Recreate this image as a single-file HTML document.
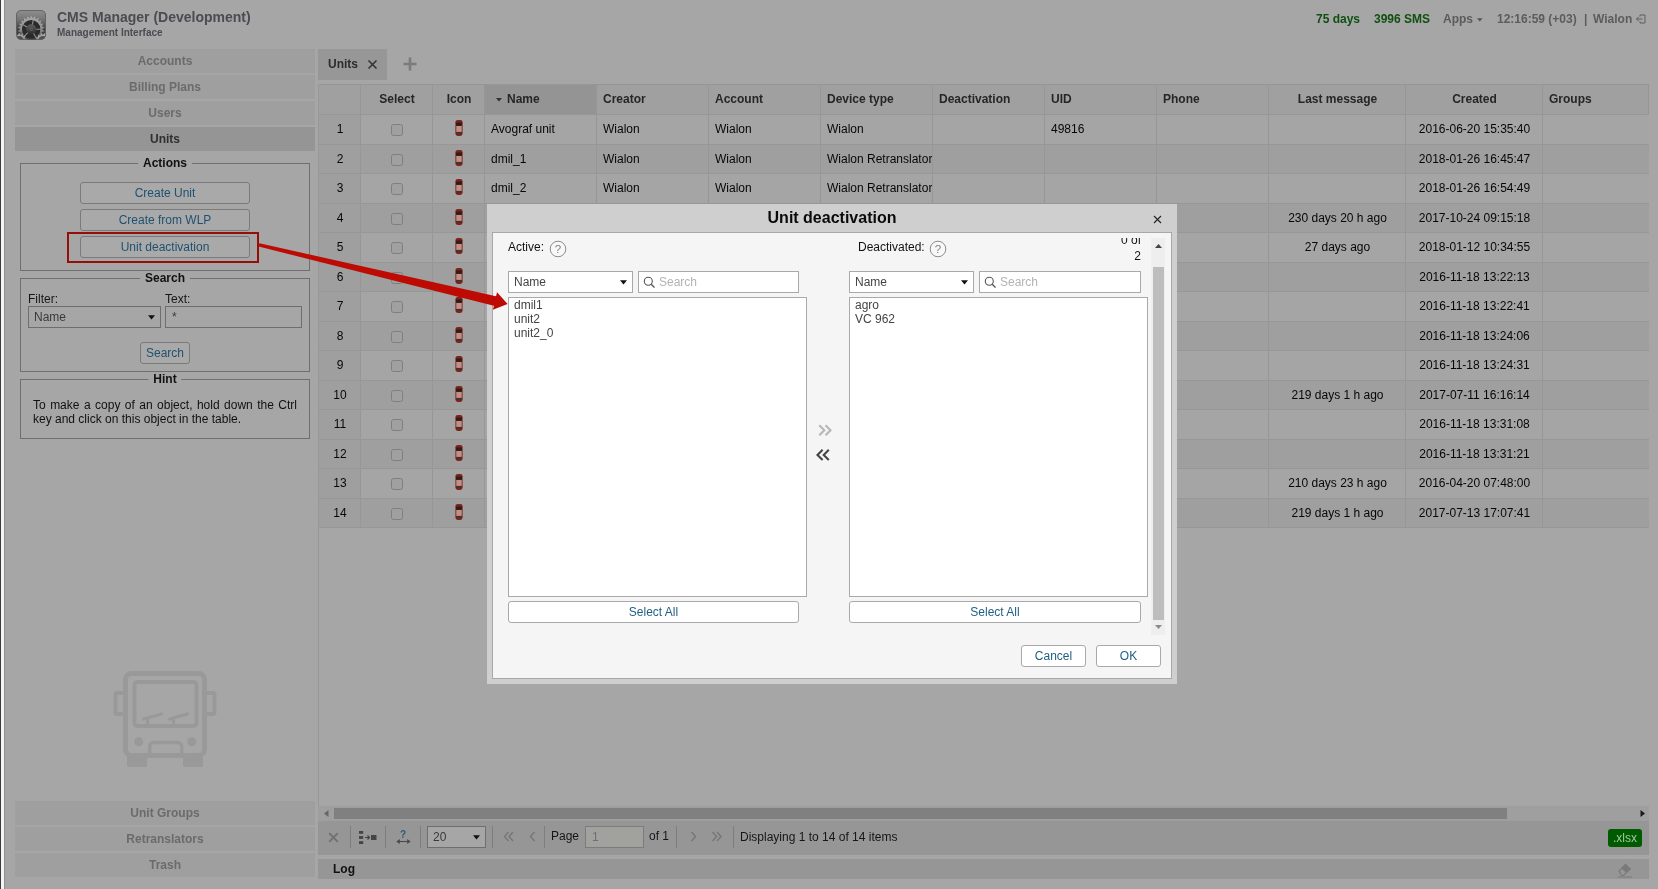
<!DOCTYPE html>
<html><head><meta charset="utf-8"><title>CMS Manager</title>
<style>
*{box-sizing:border-box;margin:0;padding:0}
html,body{width:1658px;height:889px;overflow:hidden}
body{background:#a6a6a6;font-family:"Liberation Sans",sans-serif;font-size:12px;color:#161616;position:relative}
.a{position:absolute;white-space:nowrap}
.b{font-weight:bold}
.h{display:inline}
.nav{position:absolute;left:15px;width:300px;height:24px;background:#9f9f9f;color:#6b6b6b;font-weight:bold;font-size:12px;text-align:center;line-height:25px}
.nav.sel{background:#959595;color:#2f2f2f}
.fs{position:absolute;border:1px solid #6f6f6f}
.fs .lg{position:absolute;top:-8px;left:50%;transform:translateX(-50%);background:#a6a6a6;padding:0 5px;font-weight:bold;font-size:12px;color:#111;line-height:14px}
.btn{position:absolute;border:1px solid #7a7a7a;border-radius:3px;background:#a9a9a9;color:#1f5170;font-size:12px;text-align:center}
.hc{position:absolute;top:85px;height:29px;background:#a0a0a0;border-left:1px solid #969696;font-weight:bold;color:#262626;line-height:28px;font-size:12px;white-space:nowrap;overflow:hidden}
.row{position:absolute;left:318px;width:1331px;border-top:1px solid #979797}
.c{position:absolute;top:0;bottom:0;border-left:1px solid #979797;line-height:29px;white-space:nowrap;overflow:hidden;color:#070707}
.cb{position:absolute;left:30px;top:9px;width:12px;height:12px;border:1px solid #7f7f7f;border-radius:2.500px;background:#a0a0a0}
.w{position:absolute;border:1px solid #a9a9a9;background:#fff;height:22px;line-height:20px}
</style></head>
<body>
<div id="wrap" style="position:absolute;left:0;top:0;width:1658px;height:889px;will-change:transform">
<div class="a" style="left:0;top:0;width:1px;height:889px;background:#3a3a3a"></div>
<div class="a" style="left:1px;top:0;width:3px;height:889px;background:#f4f4f4"></div>
<div class="a" style="left:4px;top:0;width:1px;height:889px;background:#8f8f8f"></div>
<svg class="a" style="left:16px;top:10px" width="30" height="30" viewBox="0 0 30 30">
<defs><linearGradient id="ig" x1="0" y1="0" x2="0" y2="1"><stop offset="0" stop-color="#8e8e8e"/><stop offset="0.3" stop-color="#777"/><stop offset="0.6" stop-color="#454545"/><stop offset="1" stop-color="#333"/></linearGradient>
<linearGradient id="hg" x1="0" y1="0" x2="0" y2="1"><stop offset="0" stop-color="#5e5e5e"/><stop offset="1" stop-color="#2e2e2e"/></linearGradient>
<linearGradient id="tg" gradientUnits="userSpaceOnUse" x1="0" y1="5" x2="0" y2="33"><stop offset="0" stop-color="#ababab"/><stop offset="0.55" stop-color="#8c8c8c"/><stop offset="0.8" stop-color="#3c3c3c"/><stop offset="1" stop-color="#2a2a2a"/></linearGradient>
<clipPath id="ic"><rect x="0.3" y="0.3" width="29.4" height="29.200" rx="4.500"/></clipPath></defs>
<rect x="0.3" y="0.3" width="29.400" height="29.200" rx="4.500" fill="url(#ig)"/>
<g clip-path="url(#ic)">
<path d="M26.00 19.30 L28.66 21.24 L25.56 22.34 L27.57 24.95 L24.29 25.14 L25.48 28.21 L22.27 27.46 L22.55 30.74 L19.69 29.12 L19.03 32.35 L16.74 29.99 L15.20 32.90 L13.66 29.99 L11.37 32.35 L10.71 29.12 L7.85 30.74 L8.13 27.46 L4.92 28.21 L6.11 25.14 L2.83 24.95 L4.84 22.34 L1.74 21.24 L4.40 19.30 L1.74 17.36 L4.84 16.26 L2.83 13.65 L6.11 13.46 L4.92 10.39 L8.13 11.14 L7.85 7.86 L10.71 9.48 L11.37 6.25 L13.66 8.61 L15.20 5.70 L16.74 8.61 L19.03 6.25 L19.69 9.48 L22.55 7.86 L22.27 11.14 L25.48 10.39 L24.29 13.46 L27.57 13.65 L25.56 16.26 L28.66 17.36z" fill="url(#tg)"/>
<circle cx="15.2" cy="19.3" r="10" fill="#2a2a2a" stroke="url(#tg)" stroke-width="1.500"/>
<path d="M15.20 19.30L17.45 9.56M15.20 19.30L6.45 14.45M15.20 19.30L25.20 19.30M15.20 19.30L8.13 26.37M15.20 19.30L20.20 27.96" stroke="#8e8e8e" stroke-width="1.100" fill="none"/>
<circle cx="15.2" cy="19.3" r="5" fill="url(#hg)"/>
<circle cx="15.2" cy="19.3" r="1.300" fill="none" stroke="#6c6c6c" stroke-width="0.600"/>
<path d="M9.00 30.80 L11.19 32.62 L8.43 33.32 L9.61 35.91 L6.82 35.33 L6.76 38.19 L4.49 36.45 L3.20 39.00 L1.91 36.45 L-0.36 38.19 L-0.42 35.33 L-3.21 35.91 L-2.03 33.32 L-4.79 32.62 L-2.60 30.80 L-4.79 28.98 L-2.03 28.28 L-3.21 25.69 L-0.42 26.27 L-0.36 23.41 L1.91 25.15 L3.20 22.60 L4.49 25.15 L6.76 23.41 L6.82 26.27 L9.61 25.69 L8.43 28.28 L11.19 28.98z" fill="#a6a6a6"/><circle cx="3.200" cy="30.800" r="4.800" fill="#505050"/>
<path d="M32.58 31.95 L34.37 34.18 L31.52 34.30 L32.17 37.08 L29.54 35.96 L28.92 38.75 L27.04 36.60 L25.27 38.84 L24.51 36.09 L21.95 37.33 L22.45 34.53 L19.60 34.54 L21.28 32.23 L18.70 31.00 L21.22 29.65 L19.43 27.42 L22.28 27.30 L21.63 24.52 L24.26 25.64 L24.88 22.85 L26.76 25.00 L28.53 22.76 L29.29 25.51 L31.85 24.27 L31.35 27.07 L34.20 27.06 L32.52 29.37 L35.10 30.60z" fill="#a6a6a6"/><circle cx="26.900" cy="30.800" r="4.800" fill="#505050"/>
</g>
<rect x="0.500" y="0.500" width="29" height="28.800" rx="4.500" fill="none" stroke="#5a5a5a" stroke-width="0.800"/>
</svg>
<div class="a b" style="left:57px;top:8.500px;font-size:14px;color:#4b4b52;line-height:16px">CMS Manager (Development)</div>
<div class="a b" style="left:57px;top:27px;font-size:10px;color:#4b4b52;line-height:12px">Management Interface</div>
<div class="nav" style="top:49px"><span class="h">Accounts</span></div>
<div class="nav" style="top:75px"><span class="h">Billing Plans</span></div>
<div class="nav" style="top:101px"><span class="h">Users</span></div>
<div class="nav sel" style="top:127px"><span class="h">Units</span></div>
<div class="nav" style="top:801px"><span class="h">Unit Groups</span></div>
<div class="nav" style="top:827px"><span class="h">Retranslators</span></div>
<div class="nav" style="top:853px"><span class="h">Trash</span></div>
<div class="fs" style="left:20px;top:163px;width:290px;height:108px"><span class="lg">Actions</span></div>
<div class="btn" style="left:80px;top:182px;width:170px;height:22px;line-height:20px">Create Unit</div>
<div class="btn" style="left:80px;top:209px;width:170px;height:22px;line-height:20px">Create from WLP</div>
<div class="btn" style="left:80px;top:236px;width:170px;height:22px;line-height:20px">Unit deactivation</div>
<div class="fs" style="left:20px;top:278px;width:290px;height:94px"><span class="lg">Search</span></div>
<div class="a" style="left:28px;top:292px;line-height:14px">Filter:</div>
<div class="a" style="left:165px;top:292px;line-height:14px">Text:</div>
<div class="a" style="left:28px;top:306px;width:133px;height:22px;border:1px solid #6e6e6e;background:#a6a6a6;line-height:20px;padding-left:5px;color:#3a3a3a">Name<svg class="a" style="right:5px;top:8px" width="7" height="5" viewBox="0 0 7 5"><path d="M0 0.300h7L3.500 4.500z" fill="#111"/></svg></div>
<div class="a" style="left:165px;top:306px;width:137px;height:22px;border:1px solid #6e6e6e;background:#a6a6a6;line-height:20px;padding-left:6px;color:#3a3a3a">*</div>
<div class="btn" style="left:140px;top:342px;width:50px;height:22px;line-height:20px">Search</div>
<div class="fs" style="left:20px;top:379px;width:290px;height:60px"><span class="lg">Hint</span></div>
<div class="a" style="left:33px;top:398px;width:264px;white-space:normal;text-align:justify;line-height:14px;color:#111">To make a copy of an object, hold down the Ctrl key and click on this object in the table.</div>
<svg class="a" style="left:110px;top:666px" width="110" height="106" viewBox="110 666 110 106" fill="none" stroke="#999999">
<rect x="125.500" y="673.500" width="79" height="82" rx="6" stroke-width="5"/>
<rect x="134.500" y="682" width="62" height="44" rx="3" stroke-width="4"/>
<path d="M123 693h-5.500a2 2 0 0 0-2 2v17a2 2 0 0 0 2 2H123M207 693h5.500a2 2 0 0 1 2 2v17a2 2 0 0 1-2 2H207" stroke-width="4"/>
<path d="M143.500 719l18-5M147.500 718.500v5M169.500 719l18-5M173.500 718.500v5" stroke-width="3.200" stroke-linecap="round"/>
<circle cx="138.700" cy="741.700" r="4.500" fill="#999999" stroke="none"/>
<circle cx="191.700" cy="741.700" r="4.500" fill="#999999" stroke="none"/>
<path d="M149.700 755v-8.500a4 4 0 0 1 4-4h24a4 4 0 0 1 4 4v8.500" stroke-width="3.600"/>
<path d="M127 757h20v8a2 2 0 0 1-2 2h-16a2 2 0 0 1-2-2zM183 757h20v8a2 2 0 0 1-2 2h-16a2 2 0 0 1-2-2z" fill="#999999" stroke="none"/>
</svg>
<div class="a b" style="left:1316px;top:12px;line-height:14px;color:#0f5012">75 days</div>
<div class="a b" style="left:1374px;top:12px;line-height:14px;color:#0f5012">3996 SMS</div>
<div class="a b" style="left:1443px;top:12px;line-height:14px;color:#5c5c5c">Apps</div>
<svg class="a" style="left:1476.500px;top:18px" width="6" height="4" viewBox="0 0 6 4"><path d="M0 0.300h5.600L2.800 3.600z" fill="#555"/></svg>
<div class="a b" style="left:1497px;top:12px;line-height:14px;color:#5c5c5c">12:16:59 (+03)</div>
<div class="a b" style="left:1584px;top:12px;line-height:14px;color:#5c5c5c">|</div>
<div class="a b" style="left:1593px;top:12px;line-height:14px;color:#5c5c5c">Wialon</div>
<svg class="a" style="left:1636px;top:14px" width="10" height="10" viewBox="0 0 10 10" fill="none" stroke="#5c5c5c" stroke-width="1"><path d="M4 2.500v-1.500h5v8h-5v-1.500"/><path d="M6.500 5h-6M2.700 2.800L0.500 5 2.700 7.200"/></svg>
<div class="a b" style="left:318px;top:49px;width:69px;height:31px;background:#979797;color:#2c2c2c;line-height:30px;padding-left:10px">Units</div>
<svg class="a" style="left:367px;top:59px" width="11" height="11" viewBox="0 0 11 11"><path d="M1.500 1.500l8 8M9.500 1.500l-8 8" stroke="#333" stroke-width="1.600" fill="none"/></svg>
<svg class="a" style="left:403px;top:57px" width="14" height="14" viewBox="0 0 14 14"><path d="M7 0.500v13M0.500 7h13" stroke="#7b7b7b" stroke-width="2.600" fill="none"/></svg>
<div class="a" style="left:318px;top:84px;width:1331px;height:1px;background:#969696"></div>
<div class="hc" style="left:318px;width:42px;"></div>
<div class="hc" style="left:360px;width:72px;text-align:center;padding-left:1px;">Select</div>
<div class="hc" style="left:432px;width:52px;text-align:center;padding-left:1px;">Icon</div>
<div class="hc" style="left:484px;width:112px;padding-left:22px;background:#949494;"><svg class="a" style="left:11px;top:13px" width="6" height="4" viewBox="0 0 6 4"><path d="M0 0h6L3 3.500z" fill="#333"/></svg>Name</div>
<div class="hc" style="left:596px;width:112px;padding-left:6px;">Creator</div>
<div class="hc" style="left:708px;width:112px;padding-left:6px;">Account</div>
<div class="hc" style="left:820px;width:112px;padding-left:6px;">Device type</div>
<div class="hc" style="left:932px;width:112px;padding-left:6px;">Deactivation</div>
<div class="hc" style="left:1044px;width:112px;padding-left:6px;">UID</div>
<div class="hc" style="left:1156px;width:112px;padding-left:6px;">Phone</div>
<div class="hc" style="left:1268px;width:137px;text-align:center;padding-left:1px;">Last message</div>
<div class="hc" style="left:1405px;width:137px;text-align:center;padding-left:1px;">Created</div>
<div class="hc" style="left:1542px;width:107px;padding-left:6px;">Groups</div>
<div class="a" style="left:1648px;top:84px;width:1px;height:30px;background:#969696"></div>
<div class="row" style="top:114px;height:30px;background:#a5a5a5"><div class="c" style="left:0px;width:42px;text-align:center;background:#9f9f9f;padding-left:1px;">1</div><div class="c" style="left:42px;width:72px;"><span class="cb"></span></div><div class="c" style="left:114px;width:52px;"><svg class="a" style="left:22px;top:4px" width="8" height="18" viewBox="0 0 8 18"><rect x="0.400" y="0.900" width="7.200" height="16" rx="2.400" fill="#7f2219"/><rect x="1" y="3.400" width="6" height="3.400" rx="0.800" fill="#2b1d18"/><rect x="1.300" y="7" width="5.400" height="5.900" fill="#bf908c"/><rect x="1.200" y="13" width="5.600" height="1.700" fill="#3a382c"/></svg></div><div class="c" style="left:166px;width:112px;padding-left:6px;">Avograf unit</div><div class="c" style="left:278px;width:112px;padding-left:6px;">Wialon</div><div class="c" style="left:390px;width:112px;padding-left:6px;">Wialon</div><div class="c" style="left:502px;width:112px;padding-left:6px;">Wialon</div><div class="c" style="left:614px;width:112px;padding-left:6px;"></div><div class="c" style="left:726px;width:112px;padding-left:6px;">49816</div><div class="c" style="left:838px;width:112px;padding-left:6px;"></div><div class="c" style="left:950px;width:137px;text-align:center;padding-left:1px;"></div><div class="c" style="left:1087px;width:137px;text-align:center;padding-left:1px;">2016-06-20 15:35:40</div><div class="c" style="left:1224px;width:107px;"></div></div>
<div class="row" style="top:144px;height:29px;background:#9f9f9f"><div class="c" style="left:0px;width:42px;text-align:center;background:#9f9f9f;padding-left:1px;">2</div><div class="c" style="left:42px;width:72px;"><span class="cb"></span></div><div class="c" style="left:114px;width:52px;"><svg class="a" style="left:22px;top:4px" width="8" height="18" viewBox="0 0 8 18"><rect x="0.400" y="0.900" width="7.200" height="16" rx="2.400" fill="#7f2219"/><rect x="1" y="3.400" width="6" height="3.400" rx="0.800" fill="#2b1d18"/><rect x="1.300" y="7" width="5.400" height="5.900" fill="#bf908c"/><rect x="1.200" y="13" width="5.600" height="1.700" fill="#3a382c"/></svg></div><div class="c" style="left:166px;width:112px;padding-left:6px;">dmil_1</div><div class="c" style="left:278px;width:112px;padding-left:6px;">Wialon</div><div class="c" style="left:390px;width:112px;padding-left:6px;">Wialon</div><div class="c" style="left:502px;width:112px;padding-left:6px;">Wialon Retranslator</div><div class="c" style="left:614px;width:112px;padding-left:6px;"></div><div class="c" style="left:726px;width:112px;padding-left:6px;"></div><div class="c" style="left:838px;width:112px;padding-left:6px;"></div><div class="c" style="left:950px;width:137px;text-align:center;padding-left:1px;"></div><div class="c" style="left:1087px;width:137px;text-align:center;padding-left:1px;">2018-01-26 16:45:47</div><div class="c" style="left:1224px;width:107px;"></div></div>
<div class="row" style="top:173px;height:30px;background:#a5a5a5"><div class="c" style="left:0px;width:42px;text-align:center;background:#9f9f9f;padding-left:1px;">3</div><div class="c" style="left:42px;width:72px;"><span class="cb"></span></div><div class="c" style="left:114px;width:52px;"><svg class="a" style="left:22px;top:4px" width="8" height="18" viewBox="0 0 8 18"><rect x="0.400" y="0.900" width="7.200" height="16" rx="2.400" fill="#7f2219"/><rect x="1" y="3.400" width="6" height="3.400" rx="0.800" fill="#2b1d18"/><rect x="1.300" y="7" width="5.400" height="5.900" fill="#bf908c"/><rect x="1.200" y="13" width="5.600" height="1.700" fill="#3a382c"/></svg></div><div class="c" style="left:166px;width:112px;padding-left:6px;">dmil_2</div><div class="c" style="left:278px;width:112px;padding-left:6px;">Wialon</div><div class="c" style="left:390px;width:112px;padding-left:6px;">Wialon</div><div class="c" style="left:502px;width:112px;padding-left:6px;">Wialon Retranslator</div><div class="c" style="left:614px;width:112px;padding-left:6px;"></div><div class="c" style="left:726px;width:112px;padding-left:6px;"></div><div class="c" style="left:838px;width:112px;padding-left:6px;"></div><div class="c" style="left:950px;width:137px;text-align:center;padding-left:1px;"></div><div class="c" style="left:1087px;width:137px;text-align:center;padding-left:1px;">2018-01-26 16:54:49</div><div class="c" style="left:1224px;width:107px;"></div></div>
<div class="row" style="top:203px;height:29px;background:#9f9f9f"><div class="c" style="left:0px;width:42px;text-align:center;background:#9f9f9f;padding-left:1px;">4</div><div class="c" style="left:42px;width:72px;"><span class="cb"></span></div><div class="c" style="left:114px;width:52px;"><svg class="a" style="left:22px;top:4px" width="8" height="18" viewBox="0 0 8 18"><rect x="0.400" y="0.900" width="7.200" height="16" rx="2.400" fill="#7f2219"/><rect x="1" y="3.400" width="6" height="3.400" rx="0.800" fill="#2b1d18"/><rect x="1.300" y="7" width="5.400" height="5.900" fill="#bf908c"/><rect x="1.200" y="13" width="5.600" height="1.700" fill="#3a382c"/></svg></div><div class="c" style="left:166px;width:112px;padding-left:6px;"></div><div class="c" style="left:278px;width:112px;padding-left:6px;"></div><div class="c" style="left:390px;width:112px;padding-left:6px;"></div><div class="c" style="left:502px;width:112px;padding-left:6px;"></div><div class="c" style="left:614px;width:112px;padding-left:6px;"></div><div class="c" style="left:726px;width:112px;padding-left:6px;"></div><div class="c" style="left:838px;width:112px;padding-left:6px;"></div><div class="c" style="left:950px;width:137px;text-align:center;padding-left:1px;">230 days 20 h ago</div><div class="c" style="left:1087px;width:137px;text-align:center;padding-left:1px;">2017-10-24 09:15:18</div><div class="c" style="left:1224px;width:107px;"></div></div>
<div class="row" style="top:232px;height:30px;background:#a5a5a5"><div class="c" style="left:0px;width:42px;text-align:center;background:#9f9f9f;padding-left:1px;">5</div><div class="c" style="left:42px;width:72px;"><span class="cb"></span></div><div class="c" style="left:114px;width:52px;"><svg class="a" style="left:22px;top:4px" width="8" height="18" viewBox="0 0 8 18"><rect x="0.400" y="0.900" width="7.200" height="16" rx="2.400" fill="#7f2219"/><rect x="1" y="3.400" width="6" height="3.400" rx="0.800" fill="#2b1d18"/><rect x="1.300" y="7" width="5.400" height="5.900" fill="#bf908c"/><rect x="1.200" y="13" width="5.600" height="1.700" fill="#3a382c"/></svg></div><div class="c" style="left:166px;width:112px;padding-left:6px;"></div><div class="c" style="left:278px;width:112px;padding-left:6px;"></div><div class="c" style="left:390px;width:112px;padding-left:6px;"></div><div class="c" style="left:502px;width:112px;padding-left:6px;"></div><div class="c" style="left:614px;width:112px;padding-left:6px;"></div><div class="c" style="left:726px;width:112px;padding-left:6px;"></div><div class="c" style="left:838px;width:112px;padding-left:6px;"></div><div class="c" style="left:950px;width:137px;text-align:center;padding-left:1px;">27 days ago</div><div class="c" style="left:1087px;width:137px;text-align:center;padding-left:1px;">2018-01-12 10:34:55</div><div class="c" style="left:1224px;width:107px;"></div></div>
<div class="row" style="top:262px;height:29px;background:#9f9f9f"><div class="c" style="left:0px;width:42px;text-align:center;background:#9f9f9f;padding-left:1px;">6</div><div class="c" style="left:42px;width:72px;"><span class="cb"></span></div><div class="c" style="left:114px;width:52px;"><svg class="a" style="left:22px;top:4px" width="8" height="18" viewBox="0 0 8 18"><rect x="0.400" y="0.900" width="7.200" height="16" rx="2.400" fill="#7f2219"/><rect x="1" y="3.400" width="6" height="3.400" rx="0.800" fill="#2b1d18"/><rect x="1.300" y="7" width="5.400" height="5.900" fill="#bf908c"/><rect x="1.200" y="13" width="5.600" height="1.700" fill="#3a382c"/></svg></div><div class="c" style="left:166px;width:112px;padding-left:6px;"></div><div class="c" style="left:278px;width:112px;padding-left:6px;"></div><div class="c" style="left:390px;width:112px;padding-left:6px;"></div><div class="c" style="left:502px;width:112px;padding-left:6px;"></div><div class="c" style="left:614px;width:112px;padding-left:6px;"></div><div class="c" style="left:726px;width:112px;padding-left:6px;"></div><div class="c" style="left:838px;width:112px;padding-left:6px;"></div><div class="c" style="left:950px;width:137px;text-align:center;padding-left:1px;"></div><div class="c" style="left:1087px;width:137px;text-align:center;padding-left:1px;">2016-11-18 13:22:13</div><div class="c" style="left:1224px;width:107px;"></div></div>
<div class="row" style="top:291px;height:30px;background:#a5a5a5"><div class="c" style="left:0px;width:42px;text-align:center;background:#9f9f9f;padding-left:1px;">7</div><div class="c" style="left:42px;width:72px;"><span class="cb"></span></div><div class="c" style="left:114px;width:52px;"><svg class="a" style="left:22px;top:4px" width="8" height="18" viewBox="0 0 8 18"><rect x="0.400" y="0.900" width="7.200" height="16" rx="2.400" fill="#7f2219"/><rect x="1" y="3.400" width="6" height="3.400" rx="0.800" fill="#2b1d18"/><rect x="1.300" y="7" width="5.400" height="5.900" fill="#bf908c"/><rect x="1.200" y="13" width="5.600" height="1.700" fill="#3a382c"/></svg></div><div class="c" style="left:166px;width:112px;padding-left:6px;"></div><div class="c" style="left:278px;width:112px;padding-left:6px;"></div><div class="c" style="left:390px;width:112px;padding-left:6px;"></div><div class="c" style="left:502px;width:112px;padding-left:6px;"></div><div class="c" style="left:614px;width:112px;padding-left:6px;"></div><div class="c" style="left:726px;width:112px;padding-left:6px;"></div><div class="c" style="left:838px;width:112px;padding-left:6px;"></div><div class="c" style="left:950px;width:137px;text-align:center;padding-left:1px;"></div><div class="c" style="left:1087px;width:137px;text-align:center;padding-left:1px;">2016-11-18 13:22:41</div><div class="c" style="left:1224px;width:107px;"></div></div>
<div class="row" style="top:321px;height:29px;background:#9f9f9f"><div class="c" style="left:0px;width:42px;text-align:center;background:#9f9f9f;padding-left:1px;">8</div><div class="c" style="left:42px;width:72px;"><span class="cb"></span></div><div class="c" style="left:114px;width:52px;"><svg class="a" style="left:22px;top:4px" width="8" height="18" viewBox="0 0 8 18"><rect x="0.400" y="0.900" width="7.200" height="16" rx="2.400" fill="#7f2219"/><rect x="1" y="3.400" width="6" height="3.400" rx="0.800" fill="#2b1d18"/><rect x="1.300" y="7" width="5.400" height="5.900" fill="#bf908c"/><rect x="1.200" y="13" width="5.600" height="1.700" fill="#3a382c"/></svg></div><div class="c" style="left:166px;width:112px;padding-left:6px;"></div><div class="c" style="left:278px;width:112px;padding-left:6px;"></div><div class="c" style="left:390px;width:112px;padding-left:6px;"></div><div class="c" style="left:502px;width:112px;padding-left:6px;"></div><div class="c" style="left:614px;width:112px;padding-left:6px;"></div><div class="c" style="left:726px;width:112px;padding-left:6px;"></div><div class="c" style="left:838px;width:112px;padding-left:6px;"></div><div class="c" style="left:950px;width:137px;text-align:center;padding-left:1px;"></div><div class="c" style="left:1087px;width:137px;text-align:center;padding-left:1px;">2016-11-18 13:24:06</div><div class="c" style="left:1224px;width:107px;"></div></div>
<div class="row" style="top:350px;height:30px;background:#a5a5a5"><div class="c" style="left:0px;width:42px;text-align:center;background:#9f9f9f;padding-left:1px;">9</div><div class="c" style="left:42px;width:72px;"><span class="cb"></span></div><div class="c" style="left:114px;width:52px;"><svg class="a" style="left:22px;top:4px" width="8" height="18" viewBox="0 0 8 18"><rect x="0.400" y="0.900" width="7.200" height="16" rx="2.400" fill="#7f2219"/><rect x="1" y="3.400" width="6" height="3.400" rx="0.800" fill="#2b1d18"/><rect x="1.300" y="7" width="5.400" height="5.900" fill="#bf908c"/><rect x="1.200" y="13" width="5.600" height="1.700" fill="#3a382c"/></svg></div><div class="c" style="left:166px;width:112px;padding-left:6px;"></div><div class="c" style="left:278px;width:112px;padding-left:6px;"></div><div class="c" style="left:390px;width:112px;padding-left:6px;"></div><div class="c" style="left:502px;width:112px;padding-left:6px;"></div><div class="c" style="left:614px;width:112px;padding-left:6px;"></div><div class="c" style="left:726px;width:112px;padding-left:6px;"></div><div class="c" style="left:838px;width:112px;padding-left:6px;"></div><div class="c" style="left:950px;width:137px;text-align:center;padding-left:1px;"></div><div class="c" style="left:1087px;width:137px;text-align:center;padding-left:1px;">2016-11-18 13:24:31</div><div class="c" style="left:1224px;width:107px;"></div></div>
<div class="row" style="top:380px;height:29px;background:#9f9f9f"><div class="c" style="left:0px;width:42px;text-align:center;background:#9f9f9f;padding-left:1px;">10</div><div class="c" style="left:42px;width:72px;"><span class="cb"></span></div><div class="c" style="left:114px;width:52px;"><svg class="a" style="left:22px;top:4px" width="8" height="18" viewBox="0 0 8 18"><rect x="0.400" y="0.900" width="7.200" height="16" rx="2.400" fill="#7f2219"/><rect x="1" y="3.400" width="6" height="3.400" rx="0.800" fill="#2b1d18"/><rect x="1.300" y="7" width="5.400" height="5.900" fill="#bf908c"/><rect x="1.200" y="13" width="5.600" height="1.700" fill="#3a382c"/></svg></div><div class="c" style="left:166px;width:112px;padding-left:6px;"></div><div class="c" style="left:278px;width:112px;padding-left:6px;"></div><div class="c" style="left:390px;width:112px;padding-left:6px;"></div><div class="c" style="left:502px;width:112px;padding-left:6px;"></div><div class="c" style="left:614px;width:112px;padding-left:6px;"></div><div class="c" style="left:726px;width:112px;padding-left:6px;"></div><div class="c" style="left:838px;width:112px;padding-left:6px;"></div><div class="c" style="left:950px;width:137px;text-align:center;padding-left:1px;">219 days 1 h ago</div><div class="c" style="left:1087px;width:137px;text-align:center;padding-left:1px;">2017-07-11 16:16:14</div><div class="c" style="left:1224px;width:107px;"></div></div>
<div class="row" style="top:409px;height:30px;background:#a5a5a5"><div class="c" style="left:0px;width:42px;text-align:center;background:#9f9f9f;padding-left:1px;">11</div><div class="c" style="left:42px;width:72px;"><span class="cb"></span></div><div class="c" style="left:114px;width:52px;"><svg class="a" style="left:22px;top:4px" width="8" height="18" viewBox="0 0 8 18"><rect x="0.400" y="0.900" width="7.200" height="16" rx="2.400" fill="#7f2219"/><rect x="1" y="3.400" width="6" height="3.400" rx="0.800" fill="#2b1d18"/><rect x="1.300" y="7" width="5.400" height="5.900" fill="#bf908c"/><rect x="1.200" y="13" width="5.600" height="1.700" fill="#3a382c"/></svg></div><div class="c" style="left:166px;width:112px;padding-left:6px;"></div><div class="c" style="left:278px;width:112px;padding-left:6px;"></div><div class="c" style="left:390px;width:112px;padding-left:6px;"></div><div class="c" style="left:502px;width:112px;padding-left:6px;"></div><div class="c" style="left:614px;width:112px;padding-left:6px;"></div><div class="c" style="left:726px;width:112px;padding-left:6px;"></div><div class="c" style="left:838px;width:112px;padding-left:6px;"></div><div class="c" style="left:950px;width:137px;text-align:center;padding-left:1px;"></div><div class="c" style="left:1087px;width:137px;text-align:center;padding-left:1px;">2016-11-18 13:31:08</div><div class="c" style="left:1224px;width:107px;"></div></div>
<div class="row" style="top:439px;height:29px;background:#9f9f9f"><div class="c" style="left:0px;width:42px;text-align:center;background:#9f9f9f;padding-left:1px;">12</div><div class="c" style="left:42px;width:72px;"><span class="cb"></span></div><div class="c" style="left:114px;width:52px;"><svg class="a" style="left:22px;top:4px" width="8" height="18" viewBox="0 0 8 18"><rect x="0.400" y="0.900" width="7.200" height="16" rx="2.400" fill="#7f2219"/><rect x="1" y="3.400" width="6" height="3.400" rx="0.800" fill="#2b1d18"/><rect x="1.300" y="7" width="5.400" height="5.900" fill="#bf908c"/><rect x="1.200" y="13" width="5.600" height="1.700" fill="#3a382c"/></svg></div><div class="c" style="left:166px;width:112px;padding-left:6px;"></div><div class="c" style="left:278px;width:112px;padding-left:6px;"></div><div class="c" style="left:390px;width:112px;padding-left:6px;"></div><div class="c" style="left:502px;width:112px;padding-left:6px;"></div><div class="c" style="left:614px;width:112px;padding-left:6px;"></div><div class="c" style="left:726px;width:112px;padding-left:6px;"></div><div class="c" style="left:838px;width:112px;padding-left:6px;"></div><div class="c" style="left:950px;width:137px;text-align:center;padding-left:1px;"></div><div class="c" style="left:1087px;width:137px;text-align:center;padding-left:1px;">2016-11-18 13:31:21</div><div class="c" style="left:1224px;width:107px;"></div></div>
<div class="row" style="top:468px;height:30px;background:#a5a5a5"><div class="c" style="left:0px;width:42px;text-align:center;background:#9f9f9f;padding-left:1px;">13</div><div class="c" style="left:42px;width:72px;"><span class="cb"></span></div><div class="c" style="left:114px;width:52px;"><svg class="a" style="left:22px;top:4px" width="8" height="18" viewBox="0 0 8 18"><rect x="0.400" y="0.900" width="7.200" height="16" rx="2.400" fill="#7f2219"/><rect x="1" y="3.400" width="6" height="3.400" rx="0.800" fill="#2b1d18"/><rect x="1.300" y="7" width="5.400" height="5.900" fill="#bf908c"/><rect x="1.200" y="13" width="5.600" height="1.700" fill="#3a382c"/></svg></div><div class="c" style="left:166px;width:112px;padding-left:6px;"></div><div class="c" style="left:278px;width:112px;padding-left:6px;"></div><div class="c" style="left:390px;width:112px;padding-left:6px;"></div><div class="c" style="left:502px;width:112px;padding-left:6px;"></div><div class="c" style="left:614px;width:112px;padding-left:6px;"></div><div class="c" style="left:726px;width:112px;padding-left:6px;"></div><div class="c" style="left:838px;width:112px;padding-left:6px;"></div><div class="c" style="left:950px;width:137px;text-align:center;padding-left:1px;">210 days 23 h ago</div><div class="c" style="left:1087px;width:137px;text-align:center;padding-left:1px;">2016-04-20 07:48:00</div><div class="c" style="left:1224px;width:107px;"></div></div>
<div class="row" style="top:498px;height:29px;background:#9f9f9f"><div class="c" style="left:0px;width:42px;text-align:center;background:#9f9f9f;padding-left:1px;">14</div><div class="c" style="left:42px;width:72px;"><span class="cb"></span></div><div class="c" style="left:114px;width:52px;"><svg class="a" style="left:22px;top:4px" width="8" height="18" viewBox="0 0 8 18"><rect x="0.400" y="0.900" width="7.200" height="16" rx="2.400" fill="#7f2219"/><rect x="1" y="3.400" width="6" height="3.400" rx="0.800" fill="#2b1d18"/><rect x="1.300" y="7" width="5.400" height="5.900" fill="#bf908c"/><rect x="1.200" y="13" width="5.600" height="1.700" fill="#3a382c"/></svg></div><div class="c" style="left:166px;width:112px;padding-left:6px;"></div><div class="c" style="left:278px;width:112px;padding-left:6px;"></div><div class="c" style="left:390px;width:112px;padding-left:6px;"></div><div class="c" style="left:502px;width:112px;padding-left:6px;"></div><div class="c" style="left:614px;width:112px;padding-left:6px;"></div><div class="c" style="left:726px;width:112px;padding-left:6px;"></div><div class="c" style="left:838px;width:112px;padding-left:6px;"></div><div class="c" style="left:950px;width:137px;text-align:center;padding-left:1px;">219 days 1 h ago</div><div class="c" style="left:1087px;width:137px;text-align:center;padding-left:1px;">2017-07-13 17:07:41</div><div class="c" style="left:1224px;width:107px;"></div></div>
<div class="a" style="left:318px;top:527px;width:1331px;height:1px;background:#979797"></div>
<div class="a" style="left:318px;top:84px;width:1px;height:722px;background:#989898"></div>
<div class="a" style="left:318px;top:806px;width:1331px;height:15px;background:#9f9f9f"></div>
<div class="a" style="left:334px;top:808px;width:1173px;height:11px;background:#808080"></div>
<svg class="a" style="left:324px;top:810px" width="5" height="7" viewBox="0 0 5 7"><path d="M4.500 0v7L0 3.500z" fill="#666"/></svg>
<svg class="a" style="left:1640px;top:810px" width="5" height="7" viewBox="0 0 5 7"><path d="M0.500 0v7L5 3.500z" fill="#1a1a1a"/></svg>
<div class="a" style="left:318px;top:821px;width:1331px;height:34px;background:#969696"></div>
<div class="a" style="left:350px;top:826px;width:1px;height:22px;background:#7e7e7e"></div>
<div class="a" style="left:385px;top:826px;width:1px;height:22px;background:#7e7e7e"></div>
<div class="a" style="left:420px;top:826px;width:1px;height:22px;background:#7e7e7e"></div>
<div class="a" style="left:492px;top:826px;width:1px;height:22px;background:#7e7e7e"></div>
<div class="a" style="left:544px;top:826px;width:1px;height:22px;background:#7e7e7e"></div>
<div class="a" style="left:676px;top:826px;width:1px;height:22px;background:#7e7e7e"></div>
<div class="a" style="left:733px;top:826px;width:1px;height:22px;background:#7e7e7e"></div>
<svg class="a" style="left:328px;top:832px" width="11" height="11" viewBox="0 0 11 11"><path d="M1.200 1.200l8.600 8.600M9.800 1.200l-8.600 8.600" stroke="#717171" stroke-width="1.900" fill="none"/></svg>
<svg class="a" style="left:358px;top:830px" width="19" height="15" viewBox="0 0 19 15"><g fill="#444"><rect x="1" y="1" width="4.200" height="2.800"/><rect x="1" y="6.100" width="4.200" height="2.800"/><rect x="1" y="11.200" width="4.200" height="2.800"/><rect x="13" y="5" width="5.500" height="5"/></g><path d="M7 7.500h4.500M9.500 5.500l2 2-2 2" stroke="#444" stroke-width="1.200" fill="none"/></svg>
<div class="a b" style="left:400px;top:829px;line-height:12px;font-size:10px;color:#2c5a7a">?</div>
<svg class="a" style="left:396px;top:838px" width="15" height="7" viewBox="0 0 15 7"><path d="M2 3.500h11" stroke="#4a4a4a" stroke-width="1.100" fill="none"/><path d="M0.300 3.500L3.800 1v5zM14.700 3.500L11.200 1v5z" fill="#4a4a4a"/></svg>
<div class="a" style="left:427px;top:826px;width:59px;height:22px;border:1px solid #6e6e6e;background:#a6a6a6;line-height:20px;padding-left:5px;color:#3a3a3a">20<svg class="a" style="right:5px;top:8px" width="7" height="5" viewBox="0 0 7 5"><path d="M0 0.300h7L3.500 4.500z" fill="#111"/></svg></div>
<svg class="a" style="left:503px;top:831px" width="12" height="11" viewBox="0 0 12 11"><path d="M5.5 1L1.5 5.500 5.5 10M10.0 1L6.0 5.500 10.0 10" stroke="#767676" stroke-width="1.400" fill="none"/></svg>
<svg class="a" style="left:529px;top:831px" width="7" height="11" viewBox="0 0 7 11"><path d="M5.5 1L1.5 5.500 5.5 10" stroke="#767676" stroke-width="1.400" fill="none"/></svg>
<div class="a" style="left:551px;top:829px;line-height:14px">Page</div>
<div class="a" style="left:585px;top:826px;width:59px;height:22px;border:1px solid #7c7c7c;background:#a1a19e;line-height:20px;padding-left:6px;color:#707070">1</div>
<div class="a" style="left:649px;top:829px;line-height:14px">of 1</div>
<svg class="a" style="left:690px;top:831px" width="7" height="11" viewBox="0 0 7 11"><path d="M1.5 1L5.5 5.500 1.5 10" stroke="#767676" stroke-width="1.400" fill="none"/></svg>
<svg class="a" style="left:711px;top:831px" width="12" height="11" viewBox="0 0 12 11"><path d="M1.5 1L5.5 5.500 1.5 10M6.0 1L10.0 5.500 6.0 10" stroke="#767676" stroke-width="1.400" fill="none"/></svg>
<div class="a" style="left:740px;top:830px;line-height:14px">Displaying 1 to 14 of 14 items</div>
<div class="a" style="left:1608px;top:829px;width:34px;height:18px;border-radius:3px;background:#005a00;color:#9ccaa0;text-align:center;line-height:18px">.xlsx</div>
<div class="a b" style="left:318px;top:859px;width:1331px;height:20px;background:#969696;line-height:20px;padding-left:15px;color:#111">Log</div>
<svg class="a" style="left:1617px;top:862px" width="16" height="16" viewBox="0 0 16 16" fill="none" stroke="#7a7a7a" stroke-width="1.200"><path d="M2 9l6.500-6.500 4.500 4.500L6.500 13.500 4.500 13.500z"/><path d="M8.500 2.500l4.500 4.500-3.500 3.500-4.500-4.500z" fill="#7a7a7a"/><path d="M1 15h14" stroke-width="1"/></svg>
<div class="a" style="left:487px;top:204px;width:690px;height:480px;background:#cfcfcf"></div>
<div class="a b" style="left:487px;top:208px;width:690px;text-align:center;font-size:16px;line-height:20px;color:#0a0a0a">Unit deactivation</div>
<svg class="a" style="left:1153px;top:215px" width="9" height="9" viewBox="0 0 9 9"><path d="M1 1l7 7M8 1l-7 7" stroke="#222" stroke-width="1.100" fill="none"/></svg>
<div class="a" style="left:492px;top:232px;width:680px;height:447px;background:#f5f5f5;border:1px solid #a8a8a8"></div>
<div class="a" style="left:508px;top:240px;line-height:14px;color:#111">Active:</div>
<svg class="a" style="left:548.5px;top:239.500px" width="18" height="18" viewBox="0 0 18 18"><circle cx="9" cy="9" r="7.800" fill="#f8f8f8" stroke="#808080" stroke-width="0.900"/><text x="9" y="13" text-anchor="middle" font-family="Liberation Sans" font-size="11.500" fill="#808080">?</text></svg>
<div class="a" style="left:858px;top:240px;line-height:14px;color:#111">Deactivated:</div>
<svg class="a" style="left:929.0px;top:239.500px" width="18" height="18" viewBox="0 0 18 18"><circle cx="9" cy="9" r="7.800" fill="#f8f8f8" stroke="#808080" stroke-width="0.900"/><text x="9" y="13" text-anchor="middle" font-family="Liberation Sans" font-size="11.500" fill="#808080">?</text></svg>
<div class="a" style="left:1100px;top:238px;width:41px;height:35px;overflow:hidden"><div class="a" style="right:0;top:-5px;line-height:14px;color:#111">0 of</div><div class="a" style="right:0;top:11px;line-height:14px;color:#111">2</div></div>
<div class="a" style="left:1151px;top:238px;width:14px;height:397px;background:#eeeeee"></div>
<div class="a" style="left:1153px;top:267px;width:11px;height:353px;background:#bdbdbd"></div>
<svg class="a" style="left:1155px;top:244px" width="7" height="4" viewBox="0 0 7 4"><path d="M0 4h7L3.500 0z" fill="#444"/></svg>
<svg class="a" style="left:1155px;top:625px" width="7" height="4" viewBox="0 0 7 4"><path d="M0 0h7L3.500 4z" fill="#8a8a8a"/></svg>
<div class="w" style="left:508px;top:271px;width:125px;padding-left:5px;color:#444">Name<svg class="a" style="right:5px;top:8px" width="7" height="5" viewBox="0 0 7 5"><path d="M0 0.300h7L3.500 4.500z" fill="#111"/></svg></div>
<div class="w" style="left:638px;top:271px;width:161px;padding-left:20px;color:#b3b3b3">Search<svg class="a" style="left:3.500px;top:4px" width="13" height="13" viewBox="0 0 13 13"><circle cx="5.300" cy="5.300" r="4" fill="none" stroke="#555" stroke-width="1.100"/><path d="M8.200 8.200l3.300 3.300" stroke="#555" stroke-width="1.300"/></svg></div>
<div class="w" style="left:508px;top:297px;width:299px;height:300px;padding:0 0 0 5px;color:#444"><div style="height:14px;line-height:14px">dmil1</div><div style="height:14px;line-height:14px">unit2</div><div style="height:14px;line-height:14px">unit2_0</div></div>
<div class="w" style="left:508px;top:601px;width:291px;border-radius:3px;text-align:center;color:#1f5f80">Select All</div>
<div class="w" style="left:849px;top:271px;width:125px;padding-left:5px;color:#444">Name<svg class="a" style="right:5px;top:8px" width="7" height="5" viewBox="0 0 7 5"><path d="M0 0.300h7L3.500 4.500z" fill="#111"/></svg></div>
<div class="w" style="left:979px;top:271px;width:162px;padding-left:20px;color:#b3b3b3">Search<svg class="a" style="left:3.500px;top:4px" width="13" height="13" viewBox="0 0 13 13"><circle cx="5.300" cy="5.300" r="4" fill="none" stroke="#555" stroke-width="1.100"/><path d="M8.200 8.200l3.300 3.300" stroke="#555" stroke-width="1.300"/></svg></div>
<div class="w" style="left:849px;top:297px;width:299px;height:300px;padding:0 0 0 5px;color:#444"><div style="height:14px;line-height:14px">agro</div><div style="height:14px;line-height:14px">VC 962</div></div>
<div class="w" style="left:849px;top:601px;width:292px;border-radius:3px;text-align:center;color:#1f5f80">Select All</div>
<svg class="a" style="left:810px;top:420px" width="30" height="45" viewBox="810 420 30 45" fill="none" stroke-width="2.100"><path d="M819.300 425.300L824.300 430.300 819.300 435.300M825.500 425.300L830.500 430.300 825.500 435.300" stroke="#b7b7b7"/><path d="M822.600 449.800L817.500 454.900 822.600 460M828.800 449.800L823.700 454.900 828.800 460" stroke="#444"/></svg>
<div class="w" style="left:1021px;top:645px;width:65px;border-radius:3px;text-align:center;color:#1f5f80">Cancel</div>
<div class="w" style="left:1096px;top:645px;width:65px;border-radius:3px;text-align:center;color:#1f5f80">OK</div>
<svg class="a" style="left:0;top:0;pointer-events:none" width="1658" height="889" viewBox="0 0 1658 889">
<rect x="68" y="233" width="190" height="29" fill="none" stroke="#940e0a" stroke-width="2"/>
<path d="M259.39 243.15 L496.07 296.32 L497.02 292.33 L507.60 304.00 L492.89 309.65 L493.84 305.66 L258.61 246.45z" fill="#bd0a02"/>
</svg>
</div>
</body></html>
